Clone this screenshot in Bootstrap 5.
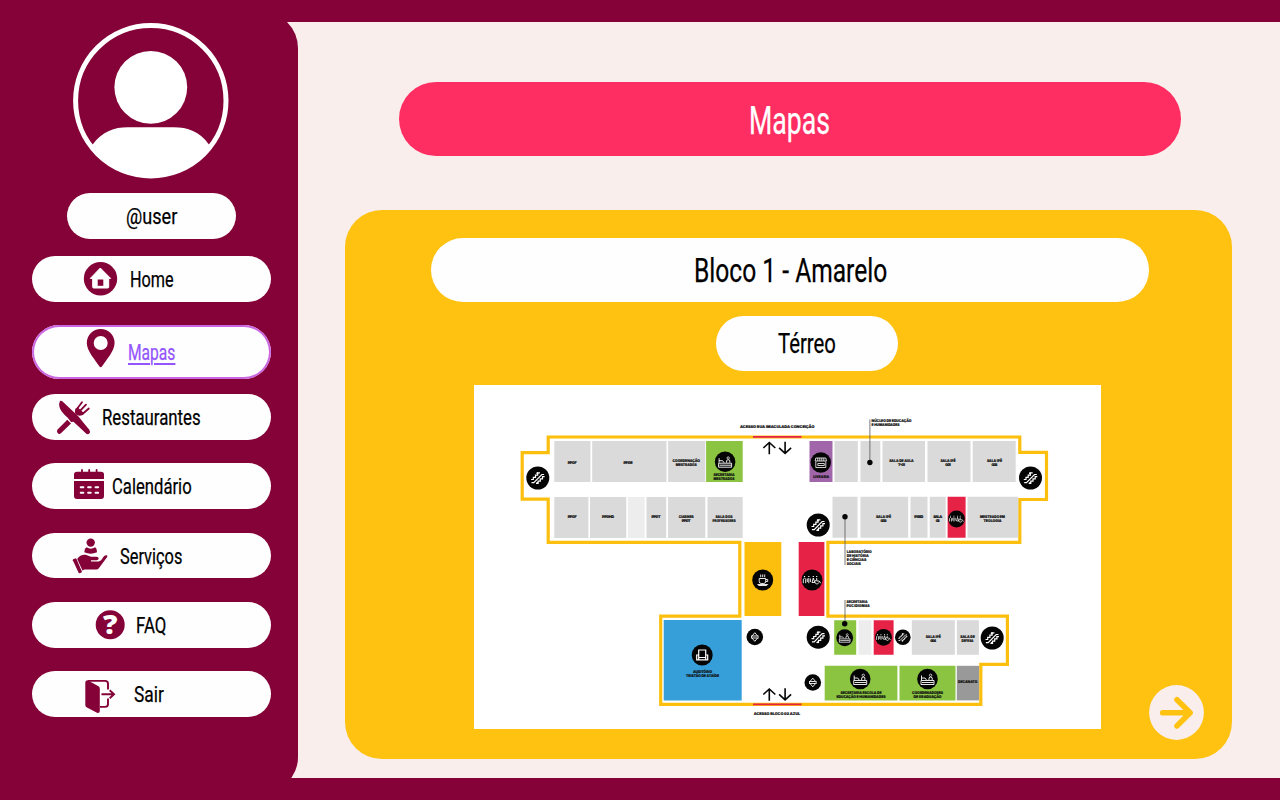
<!DOCTYPE html>
<html lang="pt-BR">
<head>
<meta charset="utf-8">
<meta name="viewport" content="width=device-width, initial-scale=1">
<title>Mapas</title>
<link href="https://cdn.jsdelivr.net/npm/bootstrap@5.3.0/dist/css/bootstrap.min.css" rel="stylesheet">
<style>
  :root { --wine:#840237; --blush:#f9eeec; --rose:#ff2e62; --amber:#ffc211; }
  body { background:var(--wine); font-family:Roboto,"Liberation Sans",sans-serif; font-weight:400; color:#000; height:800px; }
  svg { display:block; flex:none; }
  .side { width:298.3px; height:781.1px; margin-top:11.6px; background:var(--wine); border-radius:0 36px 36px 0; z-index:1; flex:none; padding:10.4px 27.3px 0 31.5px; }
  .stage { background:var(--blush); margin:22.4px 0 22.4px -38px; padding-left:38px; }
  .pill { background:#fefefe; border-radius:50rem; }
  .user-pill { width:168.5px; height:46px; margin:13px 0 16.9px 35.5px; font-size:22px; padding-top:2.5px; }
  .menu { display:grid; grid-auto-rows:69.2px; align-items:start; }
  .menu a { height:45.8px; color:#000; font-size:22px; text-decoration:none; }
  .menu a.active { height:54px; color:#9455fc; box-shadow:inset 0 0 0 2px #cb66e2; }
  .menu a.active .fit > span { text-decoration:underline; text-decoration-thickness:2px; text-underline-offset:2.5px; }
  .menu .fit { align-self:center; padding-top:2.6px; }
  .menu svg { fill:var(--wine); }
  .fit { display:block; white-space:nowrap; line-height:1.2; }
  .fit > span { display:inline-block; transform-origin:0 50%; -webkit-text-stroke:.25px currentColor; }
  .avatar { margin-left:40.5px; }
  .i-home { margin:5px 11.5px 0 51.5px; }
  .i-pin { margin:3px 11.5px 0 54.5px; }
  .i-food { margin:6px 10.8px 0 24.5px; }
  .i-cal { margin:5px 6.6px 0 41.5px; }
  .i-serv { margin:4px 11.3px 0 40.5px; }
  .i-faq { margin:7px 10.2px 0 63.5px; }
  .i-exit { margin:8px 18.3px 0 52.5px; }
  .title-pill { background:var(--rose); color:#fff; width:782px; height:74.3px; margin:59.6px 0 53.7px 100.7px; font-size:38.5px; padding-top:3px; }
  .block-card { background:var(--amber); width:887px; height:549px; border-radius:37px; margin-left:46.7px; padding-top:28px; }
  .block-pill { width:717.5px; height:64px; margin:0 0 14px 86.5px; font-size:33px; padding-top:1px; }
  .floor-pill { width:182.5px; height:55px; margin:0 0 14px 371px; font-size:28px; padding:1.5px 0 0 62px; }
  .map { margin-left:129px; background:#fff; }
  .map text { font-family:Inter,"Open Sans",sans-serif; font-weight:900; font-size:3.8px; text-anchor:middle; text-rendering:geometricPrecision; fill:#111; stroke:#111; stroke-width:.15px; }
  .map .l { text-anchor:start; }
  .next { right:28.2px; bottom:19px; width:55px; height:55px; }
</style>
</head>
<body class="overflow-hidden">
<div class="d-flex h-100">
  <aside class="side position-relative">
    <svg class="avatar" width="158" height="158" viewBox="72.500 22 158 158" fill="#fff">
      <circle cx="151.300" cy="100.700" r="75.200" fill="none" stroke="#fff" stroke-width="5"/>
      <circle cx="151.300" cy="87.300" r="36.400"/>
      <path d="M93 144.700C103 131.500 115 127.300 128 127.300h46.500C188 127.300 200 131.500 209.600 144.700L212 146A75.500 75.500 0 0 1 90.500 146Z"/>
    </svg>
    <div class="pill user-pill d-flex align-items-center justify-content-center"><span class="fit" data-w="51"><span>@user</span></span></div>
    <nav class="menu">
      <a href="#" class="pill d-flex">
        <svg class="i-home" width="35" height="35" viewBox="83 261 35 35"><circle cx="100.500" cy="278.700" r="16.700"/><path fill="#fff" stroke="#fff" stroke-linejoin="round" d="M100.300 268 110.600 278.400H108.700V287.200Q108.700 288 107.700 288H93.700Q92.700 288 92.700 287.200V278.400H90.300Z"/><path d="M97.700 279.500h5.600v6.300h-5.600z"/></svg>
        <span class="fit" data-w="43.500"><span>Home</span></span></a>
      <a href="#" class="pill d-flex active" aria-current="page">
        <svg class="i-pin" width="30" height="40" viewBox="86 328 30 40"><path fill-rule="evenodd" d="M100.700 329A13.900 13.900 0 0 0 86.800 342.900C86.800 351 95.500 360 99.300 366.300Q100.700 368 102.100 366.300C106 360 114.600 351 114.600 342.900A13.900 13.900 0 0 0 100.700 329ZM100.700 336A7 7 0 1 1 100.700 350A7 7 0 1 1 100.700 336Z"/></svg>
        <span class="fit" data-w="47.500"><span>Mapas</span></span></a>
      <a href="#" class="pill d-flex">
        <svg class="i-food" width="35" height="35" viewBox="56 400 35 35"><path d="M60 401Q61.500 400.500 62.800 401.800L78.500 416.500 89.300 430Q91 432 89.300 433.600Q87.600 435 85.800 433.300L73.500 421.700 71 422 67.500 417.500C63 413.500 59 409 59.100 404Z"/><path d="M75.500 418 88 431.300" fill="none" stroke="var(--wine)" stroke-width="4"/><path d="M67.300 419.800 71 423.500 61.200 433Q59.300 434.800 57.600 433Q56.100 431.200 57.800 429.300Z"/><path d="M76.500 409.500 82 402.200M80.200 410.700 86 404.600M82.500 414 88.800 408.500" fill="none" stroke="var(--wine)" stroke-width="1.800" stroke-linecap="round"/><path d="M75.600 408.500Q74 412.500 76 414.500Q78.500 416.500 82.800 415L84 413 77.800 407.500Z"/></svg>
        <span class="fit" data-w="98.500"><span>Restaurantes</span></span></a>
      <a href="#" class="pill d-flex">
        <svg class="i-cal" width="32" height="32" viewBox="73 468 32 32"><path d="M74 479V474.500Q74 471.700 77 471.700H101Q104 471.700 104 474.500V479ZM74 481H104V496Q104 499 101 499H77Q74 499 74 496Z"/><path d="M82 470v3M89.200 470v3M96.600 470v3" stroke="var(--wine)" stroke-width="1.800" stroke-linecap="round"/><path d="M80.700 487.300h2.700M88.100 487.300h2.700M95.500 487.300h2.700M80.700 492.700h2.700M88.100 492.700h2.700M95.500 492.700h2.700" stroke="#fff" stroke-width="1.900" stroke-linecap="round"/></svg>
        <span class="fit" data-w="79.500"><span>Calendário</span></span></a>
      <a href="#" class="pill d-flex">
        <svg class="i-serv" width="37" height="38" viewBox="72 537 37 38"><circle cx="90.700" cy="542.600" r="4.200"/><path d="M86.500 547.300Q90.700 550.200 95.200 547.300Q97 548.500 97 552.300Q90.700 555 84.300 552.300Q84.300 548.500 86.500 547.300Z"/><path d="M73.200 559.200 75.200 558.400Q76 558.200 76.500 559L81.900 571.500Q82 572.300 81.300 572.600L79.700 573.200Q78.900 573.400 78.500 572.600L72.800 560.200Q72.700 559.500 73.200 559.200Z"/><path d="M77.200 559C79 555.500 84 554 87 555.200L91 556.800H96.500Q98.600 556.900 98.700 558.500Q98.500 560 96.500 560.200H91.200Q90.300 561 91.300 561.500H98.500C100.500 561.300 101.800 559.500 103 557.500C104.500 555.300 106 554.800 107.300 555.700Q107.500 556.300 107 557.200L99 568Q98 569.600 96 569.600H84.500L82.500 570.500Z"/></svg>
        <span class="fit" data-w="62.500"><span>Serviços</span></span></a>
      <a href="#" class="pill d-flex">
        <svg class="i-faq overflow-visible" width="31" height="31" viewBox="95.500 609 31 31"><circle cx="110.700" cy="624.800" r="14.500"/><text x="110.700" y="634.300" fill="#fff" text-anchor="middle" font-family="Open Sans, sans-serif" font-weight="800" font-size="26" textLength="14.500" lengthAdjust="spacingAndGlyphs">?</text></svg>
        <span class="fit" data-w="30.500"><span>FAQ</span></span></a>
      <a href="#" class="pill d-flex">
        <svg class="i-exit" width="32" height="36" viewBox="84 679 32 36"><path d="M85.300 683Q85.300 680.300 87.500 680.300L98.500 686.300Q99.800 687 99.800 688.500V711Q99.700 713.500 97 712.800L86.500 707.200Q85.300 706.500 85.300 705Z"/><path d="M88 680.900H105Q108 680.900 108 683.500V689.500M100 706.900H105Q108 706.900 108 704V698.500M101.500 694.200H113.500M109.700 690.300 114 694.200 109.700 698.200" fill="none" stroke="var(--wine)" stroke-width="1.900"/></svg>
        <span class="fit" data-w="30"><span>Sair</span></span></a>
    </nav>
  </aside>

  <main class="stage flex-grow-1">
    <h1 class="pill title-pill d-flex align-items-center justify-content-center fw-normal"><span class="fit" data-w="81"><span>Mapas</span></span></h1>
    <section class="block-card position-relative">
      <h2 class="pill block-pill d-flex align-items-center justify-content-center fw-normal"><span class="fit" data-w="193"><span>Bloco 1 - Amarelo</span></span></h2>
      <div class="pill floor-pill d-flex align-items-center"><span class="fit" data-w="58"><span>Térreo</span></span></div>
      <svg class="map" width="627.500" height="344" viewBox="473.500 385 627.500 344" role="img" aria-label="Planta do Bloco 1, térreo">
        <defs>
          <g id="stairs"><circle r="11.500" fill="#050505"/><path d="M-6.700 1.500H-4.500V-.7H-2.300V-2.900H-.1V-5.100H2.200M-1.800 5.300H.3V3.100H2.500V.9H4.700V-1.300H6.800M-6.300 4.700-4 4.700 4-3.500 6.300-3.500" fill="none" stroke="#fff" stroke-width="1.200"/><circle cx="-.5" cy="-4.800" r="1" fill="#fff"/><circle cx="-.4" cy="5" r="1" fill="#fff"/></g>
          <g id="wc"><circle r="10.500" fill="#050505"/><g fill="none" stroke="#fff" stroke-width=".9"><path d="M-8.700 3.200V-.8L-7.500-2-6.300-.8V3.200M-4.700-1.500V2M-3.200-2V3.200M-1.600-1.500V2M1.300-2 0 2.500H2.800ZM4.700-2V1H7.200L8.700 3.200M4.300 0A2 2 0 1 0 6.800 2.500"/><path d="M-7.500-4v1M-3.200-4v1M1.300-4v1M4.700-4v1" stroke-width="1.200"/></g></g>
          <g id="desk"><circle r="10.300" fill="#050505"/><path d="M-6.500 1.500H6.500V5.500H-6.500ZM-6-3.500V1M-6-1H-2.500L-1 1M1.500 1V-1.200Q3-2.800 4.700-1.200V1M-5.500 3.500H6" fill="none" stroke="#fff" stroke-width=".9"/><circle cx="3.100" cy="-3.700" r="1.200" fill="none" stroke="#fff" stroke-width=".7"/></g>
          <g id="lift"><circle r="8.300" fill="#050505"/><path d="M-2.800-1 0-4.300 2.800-1ZM-2.800 1 0 4.300 2.800 1ZM-3.300-1.500V1.500M3.300-1.500V1.500" fill="none" stroke="#fff" stroke-width=".9"/></g>
          <g id="inout" fill="none" stroke="#050505" stroke-width="1.600"><path d="M0 12.500V.8M-6 6.300 0 .8 6 6.300M15.800 0V11.700M9.800 6.200 15.800 11.700 21.800 6.200"/></g>
        </defs>
        <path d="M547.700 437V452.700H521.700V499.200H547.700V542.300H739.300V616.200H660.200V704.300H980.300V664.300H1006.900V616.200H827.400V542.300H1019.300V499.500H1046V452.300H1019.300V437Z" fill="#fff" stroke="#fdbf0d" stroke-width="3.200"/>
        <path d="M752.500 436.900H801M752.500 704.400H801" stroke="#e62347" stroke-width="1.900"/>
        <g fill="#dadada">
          <path d="M553.800 441h36.100v41h-36.100zM591.700 441h74.300v41h-74.300zM667.600 441h37.200v41h-37.200z"/>
          <path d="M553.800 497h34.100v41h-34.100zM589.500 497h36.300v41h-36.300zM646 497h19.700v41H646zM667.600 497h37.200v41h-37.200zM707 497h35.200v41H707z"/>
          <path d="M834 441h23.300v41H834zM860 441h19.800v41H860zM882 441h42.500v41H882zM927 441h43v41h-43zM972.200 441h43v41h-43z"/>
          <path d="M832 496.700h25v41h-25zM860 496.700h47.700v41H860zM910 496.700h17v41h-17zM929.200 496.700h16v41h-16zM967 496.700h50.700v41H967z"/>
          <path d="M911.300 620.300h43v34.500h-43zM956.400 620.300h22v34.500h-22z"/>
        </g>
        <path d="M627.500 497h16.700v41h-16.700zM858 620.300h13v34.500h-13z" fill="#ededed"/>
        <path d="M956.300 665.800h22.300v34.600h-22.300z" fill="#999"/>
        <path d="M705.600 441h36.600v41h-36.600zM833.700 620.300h22v34.500h-22zM824.200 665.800h72.700v34.600h-72.700zM899 665.800h56v34.600h-56z" fill="#8bc441"/>
        <path d="M809 441h23v41h-23z" fill="#a066a9"/>
        <path d="M947.100 496.700h18v41h-18zM798.200 542h25.700v74h-25.700zM873.200 620.300h19.900v34.500h-19.900z" fill="#e62347"/>
        <path d="M744 542h36.800v74H744z" fill="#fdbf0d"/>
        <path d="M663.200 620h78v80.400h-78z" fill="#369fda"/>

        <use href="#stairs" x="537.300" y="478"/><use href="#stairs" x="1030" y="478"/><use href="#stairs" x="817.700" y="525"/><use href="#stairs" x="817.700" y="637.200"/><use href="#stairs" x="991.700" y="638"/>
        <use href="#stairs" transform="translate(902.300 637.300) scale(.68)"/>
        <use href="#wc" x="811.500" y="580"/><use href="#wc" transform="translate(956 519) scale(.8)"/><use href="#wc" transform="translate(883 637.300) scale(.8)"/>
        <use href="#desk" x="724.600" y="461.700"/><use href="#desk" x="859.700" y="679"/><use href="#desk" x="927" y="679"/><use href="#desk" transform="translate(844.200 637.700) scale(.82)"/>
        <use href="#lift" x="754.300" y="637"/><use href="#lift" x="812.300" y="682.500"/>
        <use href="#inout" x="768.800" y="441.700"/><use href="#inout" x="768.800" y="688.200"/>
        <g transform="translate(820.300 462.500)"><circle r="10.200" fill="#050505"/><path d="M-5-4.500H5L5.700-1.500H-5.700ZM-5-1V5H5V-1M-3-4.500V-1.500M-1-4.500V-1.500M1-4.500V-1.500M3-4.500V-1.500M-3 1H3.500V3H-3Z" fill="none" stroke="#fff" stroke-width=".8"/></g>
        <g transform="translate(762.200 580)"><circle r="10.500" fill="#050505"/><path d="M-3.500-1.500H3V1.500Q3 3.500 1 3.500H-1.500Q-3.500 3.500-3.500 1.500ZM3-.5H5V1.500H3M-5 4.500H5L4 5.500H-4ZM-2-5.500V-2.800M0-5.500V-2.800M2-5.500V-2.800" fill="none" stroke="#fff" stroke-width=".9"/></g>
        <g transform="translate(701.700 655)"><circle r="10.500" fill="#050505"/><path d="M-3.500 0V-5H3.500V0M-5.500 0H-3.500V2.500H3.500V0H5.500V4.800H-5.500ZM-3.500 2.500V4.500M3.500 2.500V4.500" fill="none" stroke="#fff" stroke-width="1.200"/></g>
        <path d="M869.400 419.500V462M844.500 517V565M844.500 600V624" stroke="#555" stroke-width=".8"/>
        <g fill="#050505"><circle cx="869.400" cy="462.500" r="2.700"/><circle cx="844.500" cy="516.800" r="2.700"/><circle cx="844.200" cy="623.800" r="2.700"/></g>

        <g>
          <text x="776.700" y="428" textLength="74.500" lengthAdjust="spacingAndGlyphs">ACESSO RUA IMACULADA CONCEIÇÃO</text>
          <text x="776.500" y="714.700" textLength="46.500" lengthAdjust="spacingAndGlyphs">ACESSO BLOCO 02 AZUL</text>
          <text x="571.700" y="463.600" textLength="9">PPGF</text><text x="627.500" y="463.600" textLength="9">PPGE</text>
          <text x="685.700" y="462" textLength="27.500" lengthAdjust="spacingAndGlyphs">COORDENAÇÃO</text><text x="685.700" y="466" textLength="21" lengthAdjust="spacingAndGlyphs">MESTRADOS</text>
          <text x="723.500" y="476" textLength="21" lengthAdjust="spacingAndGlyphs">SECRETARIA</text><text x="723.500" y="480" textLength="21" lengthAdjust="spacingAndGlyphs">MESTRADOS</text>
          <text x="571.700" y="518" textLength="9">PPGF</text><text x="607.500" y="518" textLength="12">PPGHD</text><text x="655.500" y="518" textLength="9">PPGT</text>
          <text x="685.700" y="518" textLength="15" lengthAdjust="spacingAndGlyphs">CIABINES</text><text x="685.700" y="522" textLength="9">PPGT</text>
          <text x="723.500" y="518" textLength="17" lengthAdjust="spacingAndGlyphs">SALA DOS</text><text x="723.500" y="522" textLength="23" lengthAdjust="spacingAndGlyphs">PROFESSORES</text>
          <text x="820.700" y="478" textLength="16" lengthAdjust="spacingAndGlyphs">LIVRARIA</text>
          <text class="l" x="871" y="422.300" textLength="40" lengthAdjust="spacingAndGlyphs">NÚCLEO DE EDUCAÇÃO</text><text class="l" x="871" y="426.300" textLength="28" lengthAdjust="spacingAndGlyphs">E HUMANIDADES</text>
          <text x="901" y="461.800" textLength="24.500" lengthAdjust="spacingAndGlyphs">SALA DE AULA</text><text x="901" y="465.500" textLength="7">T-01</text>
          <text x="947.500" y="461.800" textLength="15" lengthAdjust="spacingAndGlyphs">SALA IPÊ</text><text x="947.500" y="465.500" textLength="5.500">001</text>
          <text x="994" y="461.800" textLength="15" lengthAdjust="spacingAndGlyphs">SALA IPÊ</text><text x="994" y="465.500" textLength="6">002</text>
          <text x="883" y="517.800" textLength="15" lengthAdjust="spacingAndGlyphs">SALA IPÊ</text><text x="883" y="521.500" textLength="6">003</text>
          <text x="918.300" y="518.300" textLength="9">PIBID</text><text x="937.200" y="517.800" textLength="9">SALA</text><text x="937.200" y="522" textLength="4">02</text>
          <text x="992" y="517.800" textLength="25" lengthAdjust="spacingAndGlyphs">MESTRADO EM</text><text x="992" y="521.800" textLength="18" lengthAdjust="spacingAndGlyphs">TEOLOGIA</text>
          <text class="l" x="846.200" y="553" textLength="25" lengthAdjust="spacingAndGlyphs">LABORATÓRIO</text><text class="l" x="846.200" y="557" textLength="22" lengthAdjust="spacingAndGlyphs">DE HISTÓRIA</text><text class="l" x="846.200" y="561" textLength="19.500" lengthAdjust="spacingAndGlyphs">E CIÊNCIAS</text><text class="l" x="846.200" y="565" textLength="14" lengthAdjust="spacingAndGlyphs">SOCIAIS</text>
          <text class="l" x="846" y="603" textLength="21" lengthAdjust="spacingAndGlyphs">SECRETARIA</text><text class="l" x="846" y="607" textLength="23" lengthAdjust="spacingAndGlyphs">PUC IDIOMAS</text>
          <text x="702" y="673" textLength="19" lengthAdjust="spacingAndGlyphs">AUDITÓRIO</text><text x="702" y="677" textLength="33" lengthAdjust="spacingAndGlyphs">TRISTÃO DE ATAÍDE</text>
          <text x="932.700" y="637.600" textLength="15" lengthAdjust="spacingAndGlyphs">SALA IPÊ</text><text x="932.700" y="641.600" textLength="6">004</text>
          <text x="967" y="637.600" textLength="14.500" lengthAdjust="spacingAndGlyphs">SALA DE</text><text x="967" y="641.600" textLength="12" lengthAdjust="spacingAndGlyphs">DEFESA</text>
          <text x="860.500" y="693.500" textLength="41" lengthAdjust="spacingAndGlyphs">SECRETARIA ESCOLA DE</text><text x="860.500" y="697.500" textLength="49" lengthAdjust="spacingAndGlyphs">EDUCAÇÃO E HUMANIDADES</text>
          <text x="927" y="693.500" textLength="31" lengthAdjust="spacingAndGlyphs">COORDENADORES</text><text x="927" y="697.500" textLength="28" lengthAdjust="spacingAndGlyphs">DE GRADUAÇÃO</text>
          <text x="967.200" y="683.300" textLength="19.500" lengthAdjust="spacingAndGlyphs">DECANATO</text>
        </g>
      </svg>
      <a href="#" class="next position-absolute" aria-label="Próximo">
        <svg width="55" height="55" viewBox="1148.500 685 55 55"><circle cx="1176" cy="712.500" r="27.400" fill="#f9eeec"/><path d="M1162.200 712.700H1188M1176.500 699.700 1189.600 712.700 1176.500 725.900" fill="none" stroke="#ffc211" stroke-width="5.600" stroke-linecap="round" stroke-linejoin="round"/></svg>
      </a>
    </section>
  </main>
</div>
<script src="https://cdn.jsdelivr.net/npm/bootstrap@5.3.0/dist/js/bootstrap.bundle.min.js"></script>
<script>
  // Condense each label to its set width
  document.querySelectorAll('.fit').forEach(function (box) {
    var text = box.firstElementChild, w = parseFloat(box.dataset.w);
    text.style.transform = 'scaleX(' + w / text.offsetWidth + ')';
    box.style.width = w + 'px';
  });
</script>
</body>
</html>
